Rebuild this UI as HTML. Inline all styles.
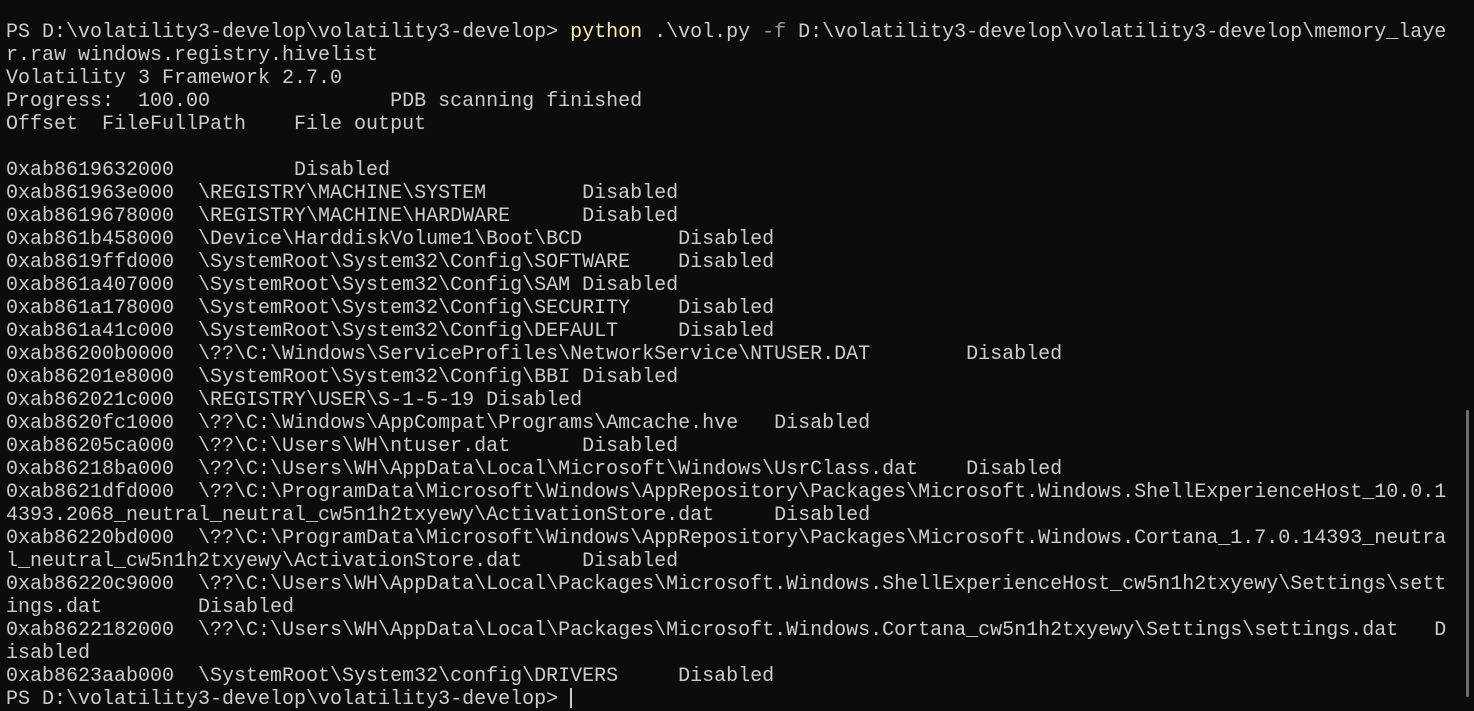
<!DOCTYPE html>
<html><head><meta charset="utf-8"><style>
html,body{margin:0;padding:0;background:#0c0c0c;width:1474px;height:697px;overflow:hidden}
pre{position:absolute;left:6px;top:21px;margin:0;font-family:"Liberation Mono",monospace;font-size:20px;line-height:23px;color:#cccccc;white-space:pre}
.y{color:#f9f1a5}.g{color:#9a9a9a}
.sb{position:absolute;left:1466px;top:410px;width:3px;height:287px;background:#6e6e6e;border-radius:2px}
.cur{display:inline-block;width:2px;height:20px;background:#ccc;vertical-align:-4px}
</style></head><body>
<pre>PS D:\volatility3-develop\volatility3-develop&gt; <span class="y">python</span> .\vol.py <span class="g">-f</span> D:\volatility3-develop\volatility3-develop\memory_laye
r.raw windows.registry.hivelist
Volatility 3 Framework 2.7.0
Progress:  100.00               PDB scanning finished
Offset  FileFullPath    File output

0xab8619632000          Disabled
0xab861963e000  \REGISTRY\MACHINE\SYSTEM        Disabled
0xab8619678000  \REGISTRY\MACHINE\HARDWARE      Disabled
0xab861b458000  \Device\HarddiskVolume1\Boot\BCD        Disabled
0xab8619ffd000  \SystemRoot\System32\Config\SOFTWARE    Disabled
0xab861a407000  \SystemRoot\System32\Config\SAM Disabled
0xab861a178000  \SystemRoot\System32\Config\SECURITY    Disabled
0xab861a41c000  \SystemRoot\System32\Config\DEFAULT     Disabled
0xab86200b0000  \??\C:\Windows\ServiceProfiles\NetworkService\NTUSER.DAT        Disabled
0xab86201e8000  \SystemRoot\System32\Config\BBI Disabled
0xab862021c000  \REGISTRY\USER\S-1-5-19 Disabled
0xab8620fc1000  \??\C:\Windows\AppCompat\Programs\Amcache.hve   Disabled
0xab86205ca000  \??\C:\Users\WH\ntuser.dat      Disabled
0xab86218ba000  \??\C:\Users\WH\AppData\Local\Microsoft\Windows\UsrClass.dat    Disabled
0xab8621dfd000  \??\C:\ProgramData\Microsoft\Windows\AppRepository\Packages\Microsoft.Windows.ShellExperienceHost_10.0.1
4393.2068_neutral_neutral_cw5n1h2txyewy\ActivationStore.dat     Disabled
0xab86220bd000  \??\C:\ProgramData\Microsoft\Windows\AppRepository\Packages\Microsoft.Windows.Cortana_1.7.0.14393_neutra
l_neutral_cw5n1h2txyewy\ActivationStore.dat     Disabled
0xab86220c9000  \??\C:\Users\WH\AppData\Local\Packages\Microsoft.Windows.ShellExperienceHost_cw5n1h2txyewy\Settings\sett
ings.dat        Disabled
0xab8622182000  \??\C:\Users\WH\AppData\Local\Packages\Microsoft.Windows.Cortana_cw5n1h2txyewy\Settings\settings.dat   D
isabled
0xab8623aab000  \SystemRoot\System32\config\DRIVERS     Disabled
PS D:\volatility3-develop\volatility3-develop&gt; <span class="cur"></span></pre>
<div class="sb"></div>
</body></html>
